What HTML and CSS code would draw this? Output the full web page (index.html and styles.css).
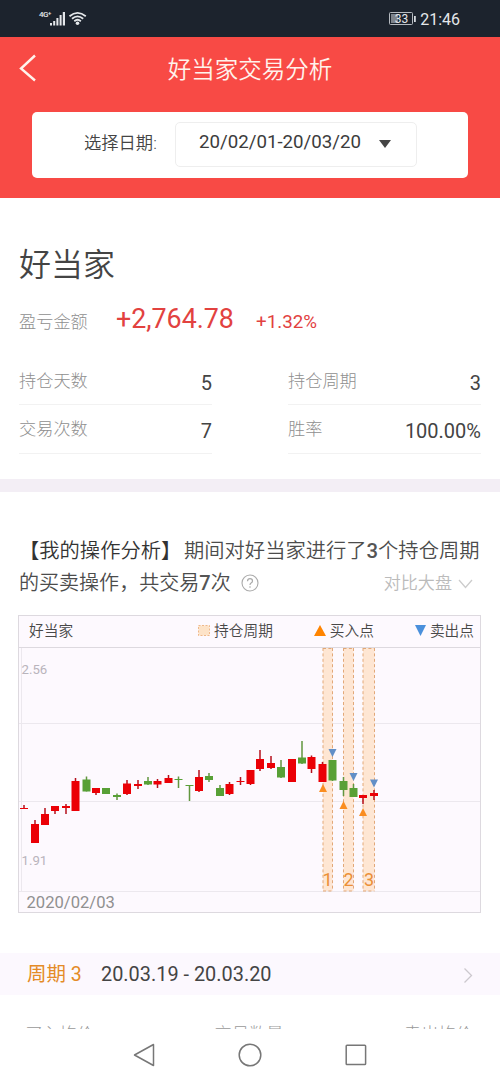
FILE: index.html
```html
<!DOCTYPE html>
<html lang="zh-CN">
<head>
<meta charset="utf-8">
<title>好当家交易分析</title>
<link rel="stylesheet" href="styles.css">
</head>
<body>
<div class="status">
  <div class="signal">
    <span class="net">4G<sup>+</sup></span>
    <svg width="37" height="16" viewBox="0 0 37 16"><g fill="#e4e7ea"><rect x="0" y="12" width="2" height="2.5"/><rect x="3.2" y="10" width="2" height="4.5"/><rect x="6.4" y="7" width="2" height="7.5"/><rect x="9.6" y="4" width="2" height="10.5"/><rect x="12.8" y="1" width="2.2" height="13.5"/><circle cx="27.5" cy="12.3" r="1.8"/></g><g fill="none" stroke="#e4e7ea" stroke-width="1.8"><path d="M19.5 5.2Q27.5-1.4 35.800 5.2"/><path d="M22 7.800Q27.500 3 33.200 7.800"/><path d="M24.300 10.200Q27.500 7.400 30.900 10.200"/></g></svg>
  </div>
  <div class="power">
    <svg width="27" height="14" viewBox="0 0 27 14"><rect x=".5" y=".5" width="23" height="12" rx="1" fill="none" stroke="#b5bac0"/><rect x="2" y="2" width="7" height="9" fill="#7d838b"/><rect x="25" y="4" width="1.8" height="6" fill="#d4d8dc"/><text class="level" x="12.500" y="10.800">33</text></svg>
    <span class="clock">21:46</span>
  </div>
</div>
<header class="header">
  <div class="titlebar">
    <svg class="back" width="18" height="28" viewBox="0 0 18 28"><path d="M16 1.500L2 14.500L16 26.500" fill="none" stroke="#fff3ec" stroke-width="2.400"/></svg>
    <h1>好当家交易分析</h1>
  </div>
  <div class="datecard">
    <span class="datelabel">选择日期:</span>
    <div class="dateselect"><span>20/02/01-20/03/20</span><svg width="12" height="8" viewBox="0 0 12 8"><path d="M0 0H12L6 8Z" fill="#444"/></svg></div>
  </div>
</header>
<section class="summary">
  <h2>好当家</h2>
  <div class="profit"><span class="label">盈亏金额</span><span class="amount">+2,764.78</span><span class="rate">+1.32%</span></div>
  <div class="stats">
    <div class="stat"><span class="label">持仓天数</span><b>5</b></div>
    <div class="stat"><span class="label">持仓周期</span><b>3</b></div>
    <div class="stat"><span class="label">交易次数</span><b>7</b></div>
    <div class="stat"><span class="label">胜率</span><b>100.00%</b></div>
  </div>
</section>
<section class="analysis">
  <div class="line first"><span class="tag">【我的操作分析】</span><span>期间对好当家进行了<em>3</em>个持仓周期</span></div>
  <div class="line second">
    <span>的买卖操作，共交易<em>7</em>次</span>
    <svg class="help" width="18" height="18" viewBox="0 0 18 18"><circle cx="9" cy="9" r="8" fill="none" stroke="#aaa" stroke-width="1.100"/><path d="M6.500 7.200Q6.600 4.700 9 4.700Q11.500 4.700 11.500 6.900Q11.500 8.100 10.100 8.900Q9 9.500 9 11M9 12.300V13.700" fill="none" stroke="#aaa" stroke-width="1.200"/></svg>
    <span class="compare">对比大盘</span>
    <svg class="chevron" width="15" height="10" viewBox="0 0 15 10"><path d="M1 1L7.500 8.500L14 1" fill="none" stroke="#ccc" stroke-width="1.300"/></svg>
  </div>
  <div class="chart">
    <div class="legend">
      <span class="name">好当家</span>
      <span class="item hold"><svg width="12" height="11" viewBox="0 0 12 11"><rect x=".5" y=".5" width="11" height="10" fill="#fde3c8" stroke="#efb98a" stroke-dasharray="2 1.500"/></svg>持仓周期</span>
      <span class="item buy"><svg width="12" height="11" viewBox="0 0 12 11"><path d="M6 0L12 11H0Z" fill="#ff8400"/></svg>买入点</span>
      <span class="item sell"><svg width="11" height="11" viewBox="0 0 11 11"><path d="M0 0H11L5.500 11Z" fill="#4a90dc"/></svg>卖出点</span>
    </div>
    <svg class="plot" width="461" height="265" viewBox="19 648 461 265">
      <g stroke="#ece8ee"><path d="M19 723.500H480M19 801.500H480M19 891.500H480M21.500 648V891"/></g>
      <g fill="#fee6d3"><rect x="323" y="648" width="9.500" height="243"/><rect x="343.500" y="648" width="10" height="243"/><rect x="363" y="648" width="11.500" height="243"/></g>
      <g fill="none" stroke="#e2a878" stroke-dasharray="3 2.400"><path d="M323 648V891M332.500 648V891M343.500 648V891M353.500 648V891M363 648V891M374.500 648V891M323 648.500H332.500M343.500 648.500H353.500M363 648.500H374.500M323 891H332.500M343.500 891H353.500M363 891H374.500"/></g>
      <g id="candles"></g>
      <g fill="#fa8d20"><path d="M323 784L327 792H319ZM343.500 801L347.500 809H339.500ZM363 808L367 816H359Z"/></g>
      <g fill="#628fc7"><path d="M328.500 749H336.500L332.500 757ZM349.500 773H357.500L353.500 781ZM370 779.500H378L374 787.500Z"/></g>
      <g class="period"><text x="327.500" y="886">1</text><text x="348.500" y="886">2</text><text x="369" y="886">3</text></g>
      <g class="price"><text x="21.500" y="673.500">2.56</text><text x="21.500" y="865">1.91</text></g>
      <text class="day" x="26.500" y="908">2020/02/03</text>
    </svg>
  </div>
</section>
<div class="cycle">
  <span class="cyclename">周期 3</span><span class="range">20.03.19 - 20.03.20</span>
  <svg width="10" height="17" viewBox="0 0 10 17"><path d="M1.500 1.500L8.500 8.500L1.500 15.500" fill="none" stroke="#ccc8ce" stroke-width="1.300"/></svg>
</div>
<div class="detail"><span>买入均价</span><span>交易数量</span><span>卖出均价</span></div>
<nav class="nav">
  <svg width="22" height="24" viewBox="0 0 22 24"><path d="M20.500 1.500V22.500L1.500 12Z" fill="none" stroke="#777" stroke-width="1.500" stroke-linejoin="round"/></svg>
  <svg width="24" height="24" viewBox="0 0 24 24"><circle cx="12" cy="12" r="10.800" fill="none" stroke="#777" stroke-width="1.500"/></svg>
  <svg width="22" height="22" viewBox="0 0 22 22"><rect x="1.200" y="1.200" width="19.400" height="19.400" rx=".8" fill="none" stroke="#777" stroke-width="1.500"/></svg>
</nav>
<script src="chart.js"></script>
</body>
</html>
```
FILE: styles.css
```css
* { box-sizing: border-box; }
body { margin: 0; width: 500px; height: 1083px; overflow: hidden; background: #fff; color: #444; font-family: Roboto, "Noto Sans CJK SC", sans-serif; display: flex; flex-direction: column; }
svg { display: block; flex: none; }
h1, h2 { margin: 0; font-weight: 350; }
span, b { white-space: nowrap; }
.status { height: 37px; flex: none; background: #1c232d; display: flex; justify-content: space-between; padding: 11px 40px 0 39px; color: #e4e7ea; }
.signal { display: flex; }
.net { width: 11px; font-size: 8px; line-height: 8px; letter-spacing: -.5px; font-weight: 500; }
.net sup { font-size: 6px; line-height: 0; vertical-align: 2px; }
.power { display: flex; gap: 4px; }
.power svg { margin-top: 1px; }
.level { font-size: 12px; fill: #e4e7ea; text-anchor: middle; }
.clock { font-size: 16px; line-height: 17px; }
.header { height: 161px; flex: none; background: #f84a45; padding: 0 32px; }
.titlebar { height: 75px; display: flex; align-items: flex-start; position: relative; justify-content: center; }
.back { position: absolute; left: -13px; top: 17px; }
h1 { font-size: 23.500px; line-height: 34px; margin-top: 16px; color: #fff3ec; }
.datecard { height: 66px; background: #fff; border-radius: 5px; display: flex; padding: 10px 51px 0 52px; }
.datelabel { font-size: 17.300px; font-weight: 350; line-height: 42px; width: 91px; }
.dateselect { width: 242px; height: 45px; border: 1px solid #eee; border-radius: 5px; display: flex; padding: 0 25px 0 23px; justify-content: space-between; font-size: 18.700px; line-height: 39px; color: #3c3c3c; }
.dateselect svg { margin-top: 17px; }
.summary { height: 294px; flex: none; border-bottom: 13px solid #f3eef5; padding: 43px 19px 0; }
h2 { font-size: 32px; line-height: 48px; }
.profit { display: flex; align-items: baseline; height: 61px; line-height: 61px; }
.label { color: #8f8f8f; font-size: 17.200px; font-weight: 300; }
.profit .label { width: 97px; }
.amount { color: #e2423f; font-size: 26.800px; width: 140px; }
.rate { color: #e2423f; font-size: 18.800px; }
.stats { display: grid; grid-template-columns: 193px 193px; justify-content: space-between; grid-template-rows: 48px 49px; margin-top: 7px; }
.stat { display: flex; justify-content: space-between; border-bottom: 1px solid #f2f2f2; }
.stat b { font-size: 20px; font-weight: 400; line-height: 52px; height: 47px; color: #444; }
.stat .label { line-height: 48px; height: 47px; }
.analysis { height: 459px; flex: none; padding: 43px 19px 0 18px; }
.line { height: 32px; display: flex; font-size: 20.300px; font-weight: 350; line-height: 33px; color: #4c4c4c; padding-left: 1px; }
.second { font-size: 20.050px; }
.line em { font-style: normal; font-weight: 500; color: #555; }
.tag { color: #333; width: 165px; }
.help { margin: 7px 0 0 10px; }
.compare { margin-left: auto; color: #bbb; font-size: 17.100px; }
.chevron { margin: 12px 8px 0 6px; }
.chart { margin-top: 16px; width: 463px; height: 298px; border: 1px solid #ddd9df; background: #fdf9fe; }
.legend { height: 32px; border-bottom: 1px solid #ddd9df; display: flex; font-size: 14.700px; font-weight: 350; line-height: 31px; color: #484848; padding: 0 6px 0 10px; }
.item { display: flex; gap: 4px; }
.item svg { margin-top: 9px; }
.hold { margin-left: auto; }
.buy, .sell { margin-left: 41px; }
.chart .plot { height: 265px; }
.period { font-size: 18px; fill: #eb8f37; text-anchor: middle; }
.price { font-size: 13.200px; fill: #b9b4bc; }
.day { font-size: 16.600px; fill: #909090; }
.cycle { height: 42px; flex: none; background: #fcf8fe; margin-top: 2px; padding: 2px 27px 0; display: flex; align-items: center; line-height: 40px; }
.cyclename { color: #e48b27; font-size: 19.500px; width: 74px; }
.range { font-size: 19.900px; }
.cycle svg { margin-left: auto; }
.detail { height: 34px; flex: none; overflow: hidden; display: flex; justify-content: space-between; padding: 27px 27px 0 25px; color: #999; font-size: 17.300px; font-weight: 300; line-height: 24px; }
.nav { height: 54px; display: flex; align-items: center; justify-content: center; gap: 83px; padding-bottom: 2px; }
```
FILE: chart.js
```js
// Each row: centre x, body top, body bottom, high, low, colour (r = up, g = down)
const rows = [
  [24,808,809,805,809,'r'],[35,824,843,820,843,'r'],[45,814,825,808,825,'r'],[55,806,811,806,814,'r'],
  [66,806,808,804,814,'r'],[75.5,781,811,778,811,'r'],[86.5,779.5,791.5,776.5,791.5,'g'],[96,788,793,788,795,'r'],
  [106,788,794,788,794,'g'],[117,795,797,793.5,800,'g'],[127,783.5,794,780,795,'r'],[138,784,786,780,789,'r'],
  [148,781,784.5,777,785,'g'],[157.5,781,784.5,779,788,'r'],[168.5,778,783,775,783,'r'],[178.5,779,780,776.5,788,'g'],
  [189.5,785,786,785,801,'g'],[199,777,791,770,792,'r'],[209,776,780,773,782,'g'],[220,788,796,785,796,'g'],
  [229.5,784,794,782,795,'r'],[240.5,781,782,777,785,'r'],[250.5,770,784,770,785,'r'],[260,759,769,750,771,'r'],
  [271,763,768,756,769,'r'],[281,767,777.5,760,778,'g'],[292,759,782,759,782,'r'],[302,757.5,763.5,741,764,'g'],
  [311.5,757,769,755.5,773,'r'],[322.5,764,782,762,782,'r'],[332.5,760,780.5,760,781,'g'],[343.5,781,790,777,796,'g'],
  [353.5,788,797,784,797,'g'],[363,795,798,795,804,'r'],[374,793,796,790,800,'r']
];
const paint = { r: ['#eb0006', '#b5101c'], g: ['#58a036', '#62963f'] };
document.getElementById('candles').innerHTML = rows.map(([x, top, bottom, high, low, c]) =>
  `<rect x="${x - 0.75}" y="${high}" width="1.5" height="${low - high}" fill="${paint[c][1]}"/>` +
  `<rect x="${x - 4}" y="${top}" width="8" height="${bottom - top}" fill="${paint[c][0]}"/>`
).join('');
```
